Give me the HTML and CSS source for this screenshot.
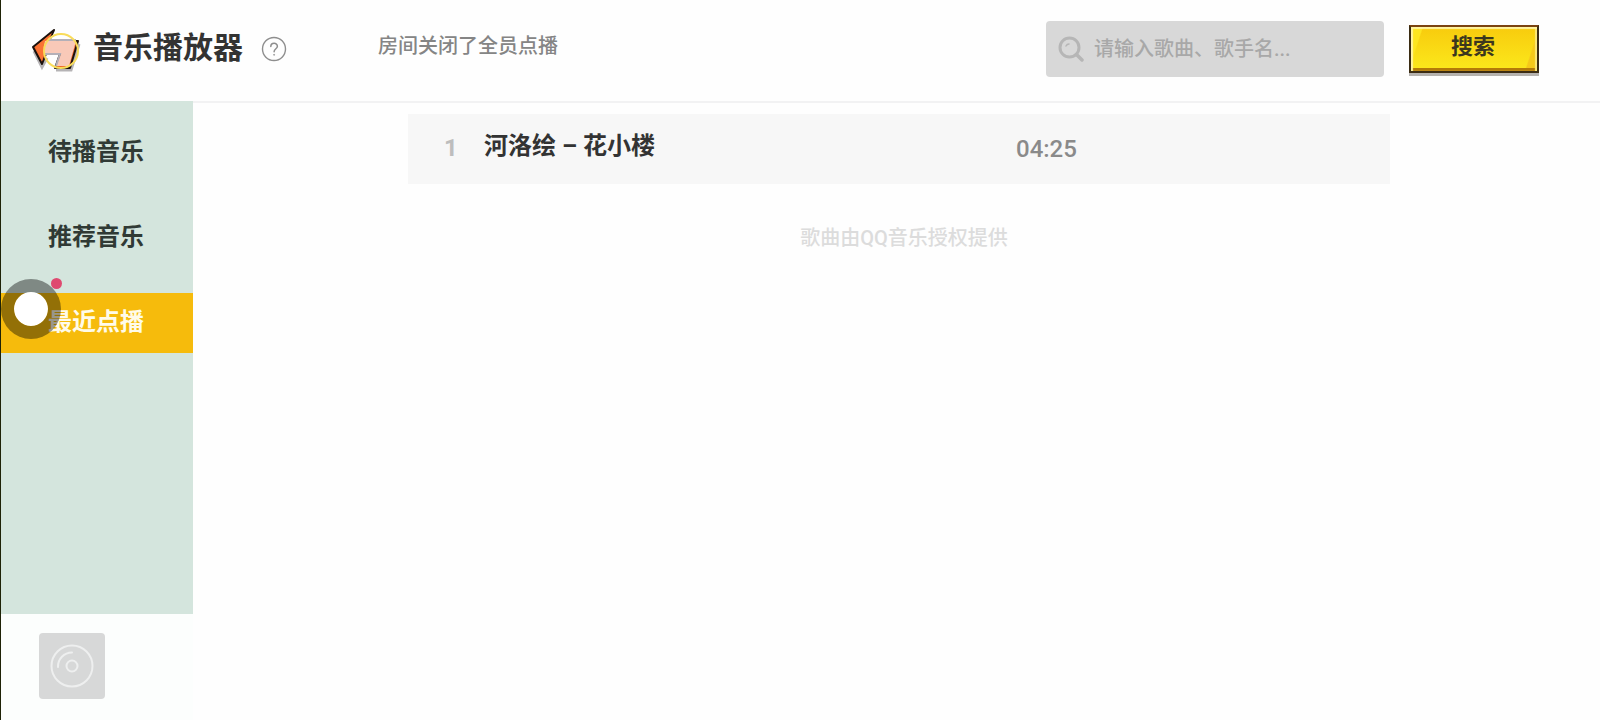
FILE: index.html
```
<!DOCTYPE html>
<html lang="zh-CN">
<head>
    <meta charset="UTF-8">
    <meta name="viewport" content="width=device-width, initial-scale=1.0">
    <title>音乐播放器</title>
    <link rel="stylesheet" href="styles.css">
</head>
<body>
    <header class="header">
        <button type="button" class="back" aria-label="返回">
            <svg width="50" height="46" viewBox="0 0 50 46">
                <path d="M3 25 L11 41 L16 32 M25 44 L40 44 L48 18" fill="none" stroke="#b5b3b5" stroke-width="3"/>
                <path d="M23 4 L2 21 L11 38 L15 28 L29 28 L24 42 L39 42 L47 15 L18 15 Z" fill="#ee6429" stroke="#1c120d" stroke-width="2" stroke-linejoin="round"/>
                <path d="M21 7 L4 21 L11 35 L16 17 Z" fill="#fa7334"/>
                <path d="M14 15 L45 15 L38 40 L25 40 L30 28 L13 28 Q12 21 14 15 Z" fill="#f9c9b8"/>
                <path d="M18 14 L45 14 M14 28 L29 28 L25 40" fill="none" stroke="#b4b0b8" stroke-width="2"/>
                <circle cx="30" cy="25" r="17" fill="none" stroke="#f9dc5b" stroke-width="2"/>
            </svg>
        </button>
        <h1 class="title">音乐播放器</h1>
        <button type="button" class="help" aria-label="帮助">
            <svg width="26" height="26" viewBox="0 0 26 26" fill="none" stroke="#8e8e8e">
                <circle cx="13" cy="13" r="11.5" stroke-width="1.4"/>
                <path d="M9.8 10.6 C9.8 6.2 16.4 6.4 16.4 10.3 C16.4 12.8 13.1 12.8 13.1 15.8" stroke-width="1.5" stroke-linecap="round"/>
                <circle cx="13.1" cy="18.8" r="0.5"/>
            </svg>
        </button>
        <p class="notice">房间关闭了全员点播</p>
        <form class="search">
            <label class="search-box">
                <svg width="26" height="26" viewBox="0 0 26 26" fill="none" stroke="#b6b6b6" stroke-linecap="round">
                    <circle cx="11.5" cy="11.5" r="9.5" stroke-width="3"/>
                    <path d="M18.5 18.5 L24 24" stroke-width="3.5"/>
                    <path d="M8 10 Q9 8 11 8" stroke-width="1.5"/>
                </svg>
                <input type="text" aria-label="搜索歌曲" placeholder="请输入歌曲、歌手名...">
            </label>
            <button type="button" class="search-btn">搜索</button>
        </form>
    </header>

    <div class="content">
        <aside class="side">
            <nav class="menu">
                <a href="#queue">待播音乐</a>
                <a href="#recommend">推荐音乐</a>
                <a href="#recent" class="active">最近点播</a>
            </nav>
            <div class="player">
                <button type="button" class="disc" aria-label="唱片">
                    <svg width="44" height="44" viewBox="0 0 44 44" fill="none" stroke="#eeefef" stroke-width="2" stroke-linecap="round">
                        <circle cx="22" cy="22" r="20.5"/>
                        <circle cx="22" cy="22" r="5.5"/>
                        <path d="M8 23 A14 14 0 0 1 22 8.5"/>
                    </svg>
                </button>
            </div>
        </aside>
        <main class="songs">
            <ol class="song-list">
                <li class="song">
                    <span class="num">1</span>
                    <span class="name">河洛绘 – 花小楼</span>
                    <span class="time">04:25</span>
                </li>
            </ol>
            <p class="source">歌曲由QQ音乐授权提供</p>
        </main>
    </div>

    <!-- 悬浮球 -->
    <button type="button" class="float-ball" aria-label="悬浮球"><span class="dot"></span></button>
</body>
</html>
```
FILE: styles.css
```
* {
    box-sizing: border-box;
}
body {
    font-family: Roboto, "Noto Sans CJK SC", sans-serif;
    margin: 0;
    min-height: 100vh;
    display: flex;
    flex-direction: column;
    background-color: #fefefe;
    border-left: 1px solid #1e2206;
    color: #333;
}
h1, p, ol {
    margin: 0;
    padding: 0;
}
button {
    border: none;
    padding: 0;
    background: none;
    font-family: inherit;
    cursor: pointer;
}
svg {
    display: block;
}
.header {
    display: flex;
    align-items: center;
    height: 101px;
    padding: 0 61px 4px 30px;
}
.back {
    margin-right: 12px;
}
.title {
    padding-bottom: 2px;
    font-size: 30px;
    line-height: 40px;
    font-weight: 700;
}
.help {
    margin-left: 18px;
}
.notice {
    margin-left: 91px;
    padding-bottom: 6px;
    font-size: 20px;
    line-height: 28px;
    font-weight: 500;
    color: #858585;
}
.search {
    display: flex;
    align-items: center;
    gap: 25px;
    margin-left: auto;
}
.search-box {
    display: flex;
    align-items: center;
    gap: 10px;
    width: 338px;
    height: 56px;
    padding: 0 12px;
    background-color: #d8d8d8;
    border-radius: 4px;
}
.search-box input {
    flex: 1;
    min-width: 0;
    padding: 0;
    border: none;
    outline: none;
    background: none;
    font-family: inherit;
    font-size: 20px;
    font-weight: 500;
    color: #333;
}
.search-box input::placeholder {
    color: #a8a8a8;
}
.search-btn {
    width: 130px;
    height: 48px;
    padding: 0 2px 10px 0;
    border: 2px solid #3b2c13;
    border-top-color: #7b4310;
    background: linear-gradient(108deg, #fde51f 8%, transparent 9%, transparent 91%, #f5c91a 92%), linear-gradient(#f8cb0d, #fbe91c);
    box-shadow: inset 2px 2px 1px #fff3a0, inset -2px 0 1px #fce878, inset 0 -3px 0 #b47b08, 0 3px 0 #b5b2ae;
    font-size: 22px;
    font-weight: 700;
    color: #3b371e;
}
.content {
    flex: 1;
    display: flex;
}
.side {
    width: 192px;
    display: flex;
    flex-direction: column;
    background-color: #fcfefd;
}
.menu {
    flex: 1;
    display: flex;
    flex-direction: column;
    gap: 25px;
    padding-top: 22px;
    background-color: #d4e5dd;
}
.menu a {
    height: 60px;
    padding-right: 2px;
    line-height: 58px;
    text-align: center;
    text-decoration: none;
    font-size: 24px;
    font-weight: 700;
    color: #303a35;
}
.menu .active {
    background-color: #f6bb0c;
    color: #fffbea;
}
.player {
    padding: 19px 38px 21px;
}
.disc {
    display: flex;
    align-items: center;
    justify-content: center;
    width: 66px;
    height: 66px;
    border-radius: 4px;
    background-color: #d7d8d8;
}
.songs {
    flex: 1;
    padding: 11px 210px 0 215px;
    border-top: 2px solid #f2f2f3;
}
.song-list {
    list-style: none;
}
.song {
    display: grid;
    grid-template-columns: 40px 532px 1fr;
    align-items: center;
    height: 70px;
    padding-left: 36px;
    background-color: #f7f7f7;
    font-size: 24px;
}
.num {
    padding-bottom: 2px;
    font-weight: 700;
    color: #bdbdbd;
}
.name {
    padding-bottom: 6px;
    line-height: 32px;
    font-weight: 700;
}
.time {
    font-weight: 500;
    color: #8a8a8a;
}
.source {
    padding: 40px 0 0 10px;
    text-align: center;
    font-size: 20px;
    line-height: 28px;
    font-weight: 500;
    color: #dcdcdc;
}
.float-ball {
    position: absolute;
    left: 1px;
    top: 279px;
    width: 60px;
    height: 60px;
    border: 13px solid rgba(0, 0, 0, 0.4);
    border-radius: 50%;
    background: #fff padding-box;
}
.dot {
    position: absolute;
    right: -14px;
    top: -14px;
    width: 11px;
    height: 11px;
    border-radius: 50%;
    background-color: #df4a70;
}
```
